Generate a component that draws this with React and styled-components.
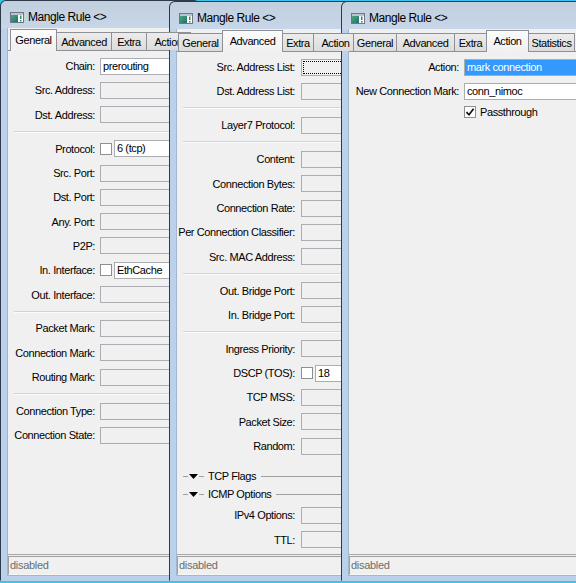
import React from "react";
import styled, { createGlobalStyle } from "styled-components";

const GlobalStyle = createGlobalStyle`
  html, body { margin: 0; padding: 0; }
  body { background: #3fc3ea; font-family: "Liberation Sans", Arial, sans-serif; }
  *, *::before, *::after { box-sizing: border-box; }
`;

const Desktop = styled.div`
  position: relative;
  width: 576px;
  height: 583px;
  overflow: hidden;
  background: #3fc3ea;
`;

const Win = styled.div`
  position: absolute;
  left: ${(p) => p.$x}px;
  top: ${(p) => p.$y}px;
  width: ${(p) => p.$w}px;
  height: ${(p) => p.$h}px;
  display: flex;
  flex-direction: column;
  border: 1px solid #2e3a4a;
  border-bottom-color: #b9cfe8;
  border-radius: 6px 6px 0 0;
  background: linear-gradient(180deg, #c2cfde 0px, #c7d6e8 27px, #bcd2eb 28px, #bad1eb 100%);
  padding: 0 6px 4px 6px;
`;

const TitleBar = styled.div`
  height: 27px;
  flex: none;
  display: flex;
  align-items: center;
  gap: 4px;
  padding: 5px 0 0 3px;
  font-size: 12px;
  letter-spacing: -0.45px;
  color: #000;
  white-space: nowrap;
`;

const Client = styled.div`
  flex: 1;
  min-height: 0;
  display: flex;
  flex-direction: column;
  background: #f0f0f0;
  border: 1px solid #a3b6cc;
  border-top: none;
`;

const TabStrip = styled.div`
  flex: none;
  height: 23px;
  display: flex;
  align-items: flex-end;
  padding-left: ${(p) => p.$pad}px;
  border-bottom: 1px solid #8e9096;
`;

const Tab = styled.div`
  flex: none;
  width: ${(p) => p.$w}px;
  height: ${(p) => (p.$active ? 22 : 18)}px;
  margin-bottom: ${(p) => (p.$active ? -1 : 0)}px;
  margin-left: -1px;
  &:first-child { margin-left: 0; }
  position: relative;
  z-index: ${(p) => (p.$active ? 2 : 1)};
  display: flex;
  align-items: center;
  justify-content: center;
  padding-bottom: ${(p) => (p.$active ? 2 : 0)}px;
  border: 1px solid #8e9096;
  border-bottom: none;
  background: ${(p) =>
    p.$active
      ? "linear-gradient(180deg, #fcfcfc, #f0f0f0)"
      : "linear-gradient(180deg, #ececec, #dcdcdc)"};
  font-size: 11px;
  letter-spacing: -0.4px;
  color: #000;
  white-space: nowrap;
  overflow: hidden;
`;

const Pane = styled.div`
  flex: 1;
  min-height: 0;
  display: flex;
  flex-direction: column;
  padding: 3px 6px 0 0;
  overflow: hidden;
`;

const Row = styled.div`
  flex: none;
  height: ${(p) => p.$h || 24.3}px;
  display: grid;
  grid-template-columns: ${(p) => p.$lw}px 1fr;
  column-gap: ${(p) => p.$gap}px;
  align-items: center;
`;

const Label = styled.span`
  justify-self: end;
  white-space: nowrap;
  font-size: 11px;
  letter-spacing: -0.4px;
  color: #000;
`;

const FieldGroup = styled.div`
  display: flex;
  align-items: center;
  gap: 2px;
  min-width: 0;
`;

const Field = styled.div`
  position: relative;
  flex: 1;
  min-width: 0;
  height: 17px;
  border: 1px solid #abadb3;
  background: ${(p) => (p.$sel ? "#3399ff" : p.$filled ? "#fff" : "#f0f0f0")};
  color: ${(p) => (p.$sel ? "#fff" : "#000")};
  padding-left: 2px;
  font-size: 11px;
  letter-spacing: -0.4px;
  line-height: 15px;
  white-space: nowrap;
  overflow: hidden;
  ${(p) =>
    p.$focus &&
    `&::after { content: ""; position: absolute; left: 1px; top: 1px; right: 1px; bottom: 1px; border: 1px dotted #000; }`}
`;

const Check = styled.span`
  flex: none;
  width: 12px;
  height: 12px;
  border: 1px solid #8e8f8f;
  background: #fff;
  display: flex;
  align-items: center;
  justify-content: center;
`;

const Sep = styled.div`
  flex: none;
  height: 9.7px;
  display: flex;
  align-items: center;
  margin-left: 6px;
  &::before {
    content: "";
    flex: 1;
    height: 2px;
    border-top: 1px solid #d3d3d3;
    border-bottom: 1px solid #fbfbfb;
  }
`;

const Group = styled.div`
  flex: none;
  height: 18px;
  margin-top: ${(p) => p.$mt || 0}px;
  margin-left: 6px;
  display: flex;
  align-items: center;
  gap: 1px;
  font-size: 11px;
  letter-spacing: -0.4px;
  color: #000;
  white-space: nowrap;
`;

const GroupLine = styled.span`
  flex: ${(p) => (p.$w ? "none" : 1)};
  width: ${(p) => (p.$w ? `${p.$w}px` : "auto")};
  height: 1px;
  background: #a0a0a0;
`;

const GroupText = styled.span`
  padding: 0 4px 0 3px;
`;

const CheckLabel = styled.div`
  display: flex;
  align-items: center;
  gap: 4px;
  font-size: 11px;
  letter-spacing: -0.4px;
  color: #000;
  white-space: nowrap;
`;

const StatusBar = styled.div`
  flex: none;
  height: 21px;
  border-top: 1px solid #a7a7a7;
  padding: 1px 1px 0 0;
`;

const StatusBox = styled.div`
  height: 19px;
  border: 1px solid;
  border-color: #a0a0a0 #f6f6f6 #f6f6f6 #a0a0a0;
  padding-left: 1px;
  font-size: 11px;
  letter-spacing: -0.3px;
  line-height: 17px;
  color: #6d6d6d;
  white-space: nowrap;
`;

const WinIcon = () => (
  <svg width="14" height="11" viewBox="0 0 14 11">
    <defs>
      <linearGradient id="wi" x1="0" y1="0" x2="1" y2="1">
        <stop offset="0" stopColor="#4fa77a" />
        <stop offset="1" stopColor="#1d6e74" />
      </linearGradient>
    </defs>
    <rect x="0.5" y="0.5" width="13" height="10" fill="#fff" stroke="#6b7787" />
    <rect x="1" y="1" width="12" height="2" fill="#b9c4d0" />
    <rect x="1" y="3" width="7" height="7" fill="url(#wi)" />
    <rect x="10" y="3.5" width="1.5" height="3.5" fill="#2b8c55" />
    <rect x="10" y="8" width="1.5" height="1.5" fill="#2b8c55" />
  </svg>
);

const Tick = () => (
  <svg width="10" height="10" viewBox="0 0 10 10">
    <path d="M1.5 5.2 L4 7.8 L8.6 1.8" fill="none" stroke="#111" strokeWidth="1.7" />
  </svg>
);

const Tri = () => (
  <svg width="9" height="5" viewBox="0 0 9 5">
    <polygon points="0,0 9,0 4.5,5" fill="#000" />
  </svg>
);

function Body({ items, lw, gap }) {
  return items.map((it, i) => {
    if (it === "sep") return <Sep key={i} />;
    if (it.group)
      return (
        <Group key={i} $mt={it.mt}>
          <GroupLine $w={5} />
          <Tri />
          <GroupLine $w={5} />
          <GroupText>{it.group}</GroupText>
          <GroupLine />
        </Group>
      );
    if (it.checkRow)
      return (
        <Row key={i} $lw={lw} $gap={gap} $h={16}>
          <span />
          <CheckLabel>
            <Check>{it.on && <Tick />}</Check>
            {it.checkRow}
          </CheckLabel>
        </Row>
      );
    return (
      <Row key={i} $lw={lw} $gap={gap}>
        <Label>{it.l}</Label>
        <FieldGroup>
          {it.check && <Check />}
          <Field $filled={!!it.v} $sel={it.sel} $focus={it.focus}>
            {it.v}
          </Field>
        </FieldGroup>
      </Row>
    );
  });
}

function Window({ x, y, w, h, tabs, pad, items, lw, gap }) {
  return (
    <Win $x={x} $y={y} $w={w} $h={h}>
      <TitleBar>
        <WinIcon />
        <span>Mangle Rule &lt;&gt;</span>
      </TitleBar>
      <Client>
        <TabStrip $pad={pad}>
          {tabs.map((t) => (
            <Tab key={t.n} $w={t.w} $active={t.a}>
              {t.n}
            </Tab>
          ))}
        </TabStrip>
        <Pane>
          <Body items={items} lw={lw} gap={gap} />
        </Pane>
        <StatusBar>
          <StatusBox>disabled</StatusBox>
        </StatusBar>
      </Client>
    </Win>
  );
}

const w1Items = [
  { l: "Chain:", v: "prerouting" },
  { l: "Src. Address:" },
  { l: "Dst. Address:" },
  "sep",
  { l: "Protocol:", check: true, v: "6 (tcp)" },
  { l: "Src. Port:" },
  { l: "Dst. Port:" },
  { l: "Any. Port:" },
  { l: "P2P:" },
  { l: "In. Interface:", check: true, v: "EthCache" },
  { l: "Out. Interface:" },
  "sep",
  { l: "Packet Mark:" },
  { l: "Connection Mark:" },
  { l: "Routing Mark:" },
  "sep",
  { l: "Connection Type:" },
  { l: "Connection State:" },
];

const w2Items = [
  { l: "Src. Address List:", focus: true },
  { l: "Dst. Address List:" },
  "sep",
  { l: "Layer7 Protocol:" },
  "sep",
  { l: "Content:" },
  { l: "Connection Bytes:" },
  { l: "Connection Rate:" },
  { l: "Per Connection Classifier:" },
  { l: "Src. MAC Address:" },
  "sep",
  { l: "Out. Bridge Port:" },
  { l: "In. Bridge Port:" },
  "sep",
  { l: "Ingress Priority:" },
  { l: "DSCP (TOS):", check: true, v: "18" },
  { l: "TCP MSS:" },
  { l: "Packet Size:" },
  { l: "Random:" },
  { group: "TCP Flags", mt: 9 },
  { group: "ICMP Options" },
  { l: "IPv4 Options:" },
  { l: "TTL:" },
];

const w3Items = [
  { l: "Action:", v: "mark connection", sel: true },
  { l: "New Connection Mark:", v: "conn_nimoc" },
  { checkRow: "Passthrough", on: true },
];

export default function App() {
  return (
    <>
      <GlobalStyle />
      <Desktop>
        <Window
          x={0}
          y={0}
          w={200}
          h={581}
          pad={2}
          lw={87}
          gap={5}
          items={w1Items}
          tabs={[
            { n: "General", w: 47, a: true },
            { n: "Advanced", w: 56 },
            { n: "Extra", w: 36 },
            { n: "Action", w: 45 },
          ]}
        />
        <Window
          x={169}
          y={1}
          w={200}
          h={580}
          pad={1}
          lw={118}
          gap={6}
          items={w2Items}
          tabs={[
            { n: "General", w: 45 },
            { n: "Advanced", w: 61, a: true },
            { n: "Extra", w: 32 },
            { n: "Action", w: 45 },
          ]}
        />
        <Window
          x={341}
          y={1}
          w={260}
          h={580}
          pad={4}
          lw={110}
          gap={5}
          items={w3Items}
          tabs={[
            { n: "General", w: 44 },
            { n: "Advanced", w: 59 },
            { n: "Extra", w: 33 },
            { n: "Action", w: 43, a: true },
            { n: "Statistics", w: 47 },
          ]}
        />
      </Desktop>
    </>
  );
}
